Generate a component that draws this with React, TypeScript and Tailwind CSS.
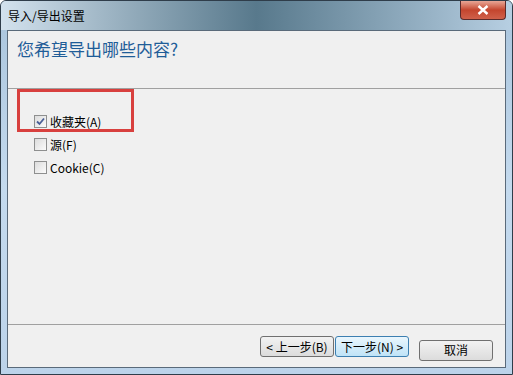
const font = { fontFamily: '"Noto Sans CJK SC", "Liberation Sans", sans-serif' };

const Check = ({ checked }: { checked?: boolean }) => (
  <span className="w-[13px] h-[13px] border border-[#8e8f8f] bg-gradient-to-br from-[#dcdcdc] to-[#fbfbfb] flex items-center justify-center shrink-0">
    {checked && (
      <svg width="9" height="9" viewBox="0 0 9 9">
        <path d="M1 4.5 L3.5 7 L8 1.5" stroke="#4a5f97" strokeWidth="1.8" fill="none" />
      </svg>
    )}
  </span>
);

const Btn = ({ label, focus }: { label: string; focus?: boolean }) => (
  <button
    className={
      'w-[74px] h-[21px] rounded-[3px] border text-[12px] leading-none text-black ' +
      (focus
        ? 'border-[#3c7fb1] bg-gradient-to-b from-[#eaf6fd] to-[#bfe3f7]'
        : 'border-[#707070] bg-gradient-to-b from-[#f2f2f2] to-[#dcdcdc]')
    }
  >
    {label}
  </button>
);

export default function App() {
  return (
    <div
      className="w-[513px] h-[375px] flex flex-col border border-[#2f3d4a] rounded-t-[6px] overflow-hidden bg-gradient-to-b from-[#a9c4dc] via-[#c4daee] to-[#bcd3ea]"
      style={font}
    >
      <div className="h-[29px] shrink-0 flex justify-between bg-gradient-to-r from-[#d3e2ee] via-[#58798c] to-[#b7cfe2]">
        <span className="pl-[7px] pt-[6px] text-[12px] text-black">导入/导出设置</span>
        <span className="w-[46px] h-[19px] mr-[6px] rounded-b-[4px] border border-t-0 border-[#5b2a2a] bg-gradient-to-b from-[#e7a696] via-[#c4452e] to-[#d0604a] flex items-center justify-center">
          <svg width="12" height="10" viewBox="0 0 12 10">
            <path d="M1.5 1 L10.5 9 M10.5 1 L1.5 9" stroke="#fff" strokeWidth="2.4" />
          </svg>
        </span>
      </div>

      <div className="flex-1 mx-[6px] mb-[6px] border border-[#5a6a7a] bg-[#f0f0f0] flex flex-col">
        <div className="h-[58px] shrink-0 border-b border-[#a0a0a0] pl-[9px] pt-[5px] text-[17px] text-[#1f5d98]">
          您希望导出哪些内容?
        </div>

        <div className="flex-1 relative pl-[26px] pt-[26px] flex flex-col gap-[10px] text-[12px] text-black">
          <div className="absolute left-[9px] top-0 w-[117px] h-[43px] border-[3px] border-[#d8403e]" />
          <label className="flex items-center gap-[3px] h-[13px]">
            <Check checked />
            收藏夹(A)
          </label>
          <label className="flex items-center gap-[3px] h-[13px]">
            <Check />
            源(F)
          </label>
          <label className="flex items-center gap-[3px] h-[13px]">
            <Check />
            Cookie(C)
          </label>
        </div>

        <div className="h-[43px] shrink-0 border-t border-[#a0a0a0] flex justify-end items-start pt-[11px] pr-[12px]">
          <div className="flex gap-[1px]">
            <Btn label="< 上一步(B)" />
            <Btn label="下一步(N) >" focus />
          </div>
          <div className="ml-[10px]">
            <Btn label="取消" />
          </div>
        </div>
      </div>
    </div>
  );
}
